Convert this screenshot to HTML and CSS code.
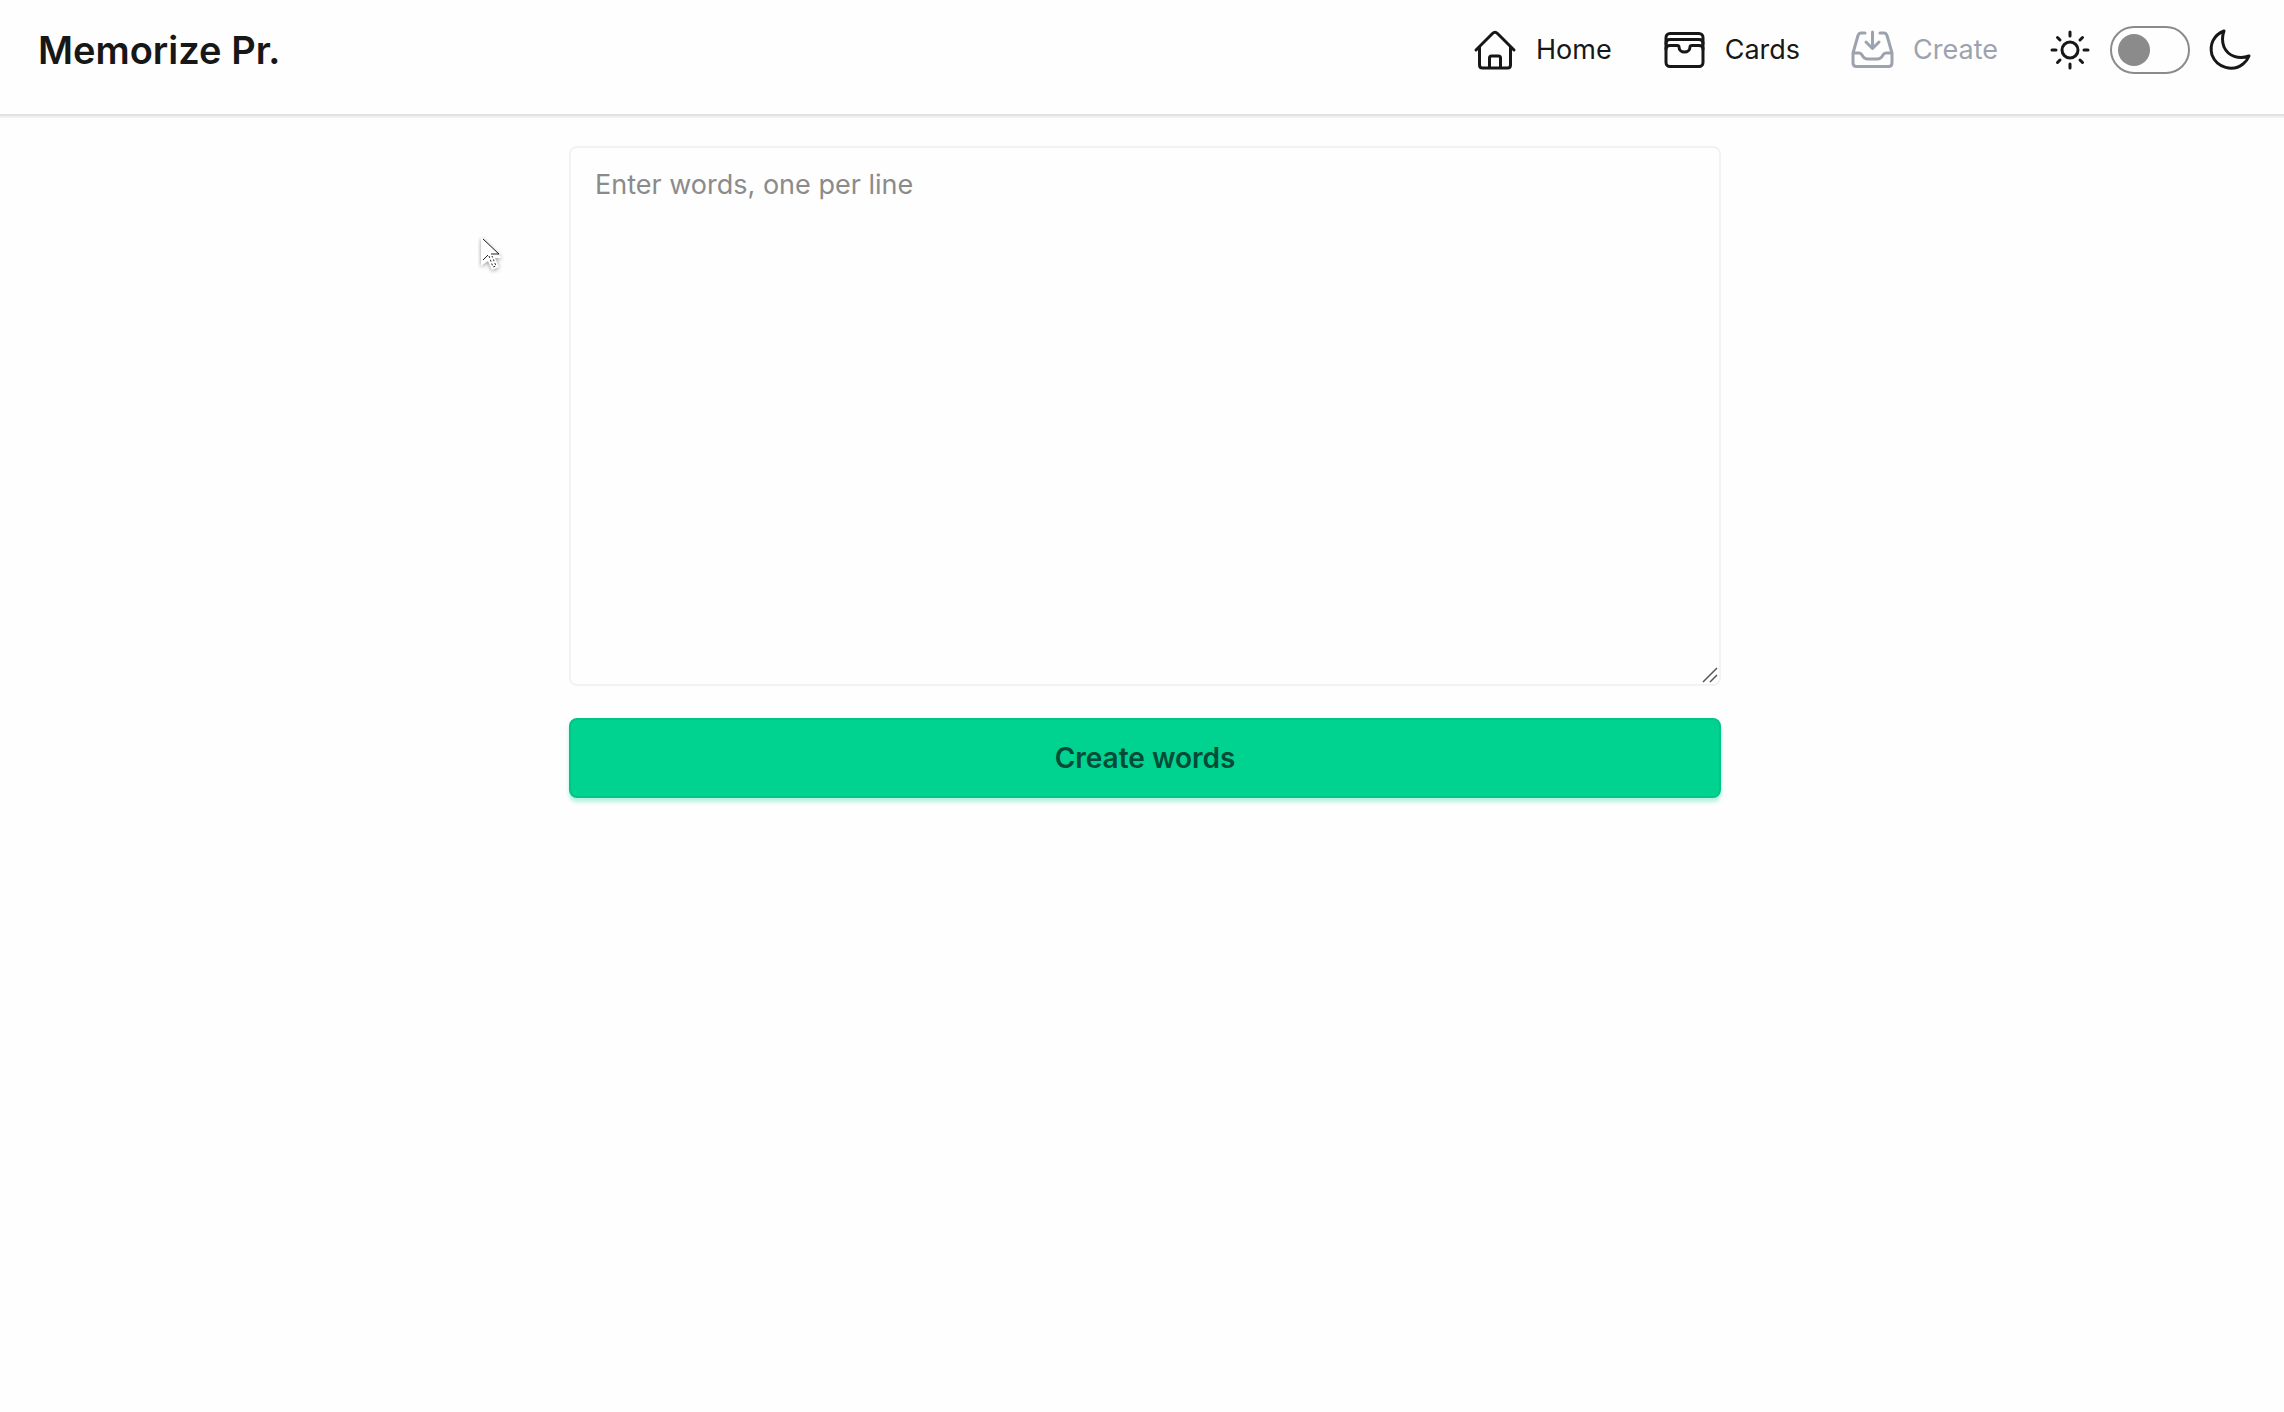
FILE: index.html
```html
<!DOCTYPE html>
<html lang="en">
<head>
<meta charset="utf-8">
<title>Memorize Pr.</title>
<link rel="stylesheet" href="styles.css">
</head>
<body>
<header class="navbar">
  <a class="brand" href="#">Memorize Pr.</a>
  <nav class="nav">
    <a class="nav-link" href="#">
      <svg class="icon" viewBox="0 0 48 48" aria-hidden="true"><path d="M5 24 21.500 7.500Q24 5 26.500 7.500L43 24M8.500 21V39Q8.500 42 11.500 42H36.500Q39.500 42 39.500 39V21M18.500 42V32Q18.500 30 20.500 30H27.500Q29.500 30 29.500 32V42"/></svg>
      Home
    </a>
    <a class="nav-link" href="#">
      <svg class="icon" viewBox="0 0 48 48" aria-hidden="true"><rect x="6" y="7.500" width="37" height="33" rx="4"/><path d="M6 17.500Q6 13.500 10 13.500H39Q43 13.500 43 17.500M6 23Q6 19.500 10 19.500H17Q19 19.500 19 21A5.500 5 0 0 0 30 21Q30 19.500 32 19.500H39Q43 19.500 43 23"/></svg>
      Cards
    </a>
    <a class="nav-link nav-link-active" href="#" aria-current="page">
      <svg class="icon" viewBox="0 0 48 48" aria-hidden="true"><path d="M17 7H13Q11 7 10 9.500L5 27V37Q5 40.500 8.500 40.500H40.500Q44 40.500 44 37V27L39 9.500Q38 7 36 7H32M24.500 6V22M18 16 24.500 22.500 31 16M5 27H11Q13 27 14 29Q16 33 20 33H29Q33 33 35 29Q36 27 38 27H44"/></svg>
      Create
    </a>
  </nav>
  <label class="theme">
    <svg class="icon" viewBox="0 0 48 48" aria-hidden="true"><circle cx="24" cy="24" r="8"/><path d="M24 6V10M24 38V42M6 24H10M38 24H42M11.500 11.500 14 14M34 34 36.500 36.500M11.500 36.500 14 34M34 14 36.500 11.500"/></svg>
    <input class="toggle" type="checkbox" aria-label="Dark theme">
    <svg class="icon" viewBox="0 0 48 48" aria-hidden="true"><path d="M18 5C8 9 3 18 6 29C11 42 27 46 37 38Q41 35 43 30C33 34 22 30 18 21Q15 13 18 5Z"/></svg>
  </label>
</header>
<main class="page">
  <form class="word-form">
    <div class="field">
      <textarea class="words" placeholder="Enter words, one per line" aria-label="Words"></textarea>
      <svg class="grip" viewBox="0 0 16 16" aria-hidden="true"><path d="M1 15 15 1M8 15 15 8"/></svg>
    </div>
    <button class="submit" type="button">Create words</button>
  </form>
</main>
<svg class="pointer" viewBox="0 0 28 38" aria-hidden="true"><path class="pointer-body" d="M3 1V30L10 25L14 34L21 31L17 22H24Z"/><path class="pointer-line" d="M5 3 21 18H13M5 24 10 19"/><path class="pointer-line pointer-dots" d="M11 20 15 31 18 30 14 20"/></svg>
</body>
</html>
```
FILE: styles.css
```css
* {
  box-sizing: border-box;
}

body {
  margin: 0;
  background: #fefefe;
  color: #171717;
  font-family: Inter, "Liberation Sans", sans-serif;
  font-size: 27px;
  line-height: 40px;
}

.navbar {
  display: flex;
  align-items: center;
  padding: 16px 30px 30px 38px;
  min-height: 114px;
  box-shadow: 0 2px 0 #e2e2e2, 0 4px 0 #f1f1f1;
}

.brand {
  margin-right: auto;
  color: inherit;
  font-size: 38px;
  font-weight: 600;
  text-decoration: none;
}

.nav {
  display: flex;
  gap: 48px;
}

.nav-link {
  display: flex;
  align-items: center;
  gap: 17px;
  color: inherit;
  text-decoration: none;
}

.nav-link-active {
  color: #9ca3af;
}

.icon {
  width: 48px;
  height: 48px;
  flex: none;
  fill: none;
  stroke: currentColor;
  stroke-width: 3;
  stroke-linecap: round;
  stroke-linejoin: round;
}

.theme {
  display: flex;
  align-items: center;
  gap: 16px;
  margin-left: 48px;
}

.toggle {
  appearance: none;
  width: 80px;
  height: 48px;
  margin: 0;
  padding: 6px;
  border: 2px solid #8b8b8b;
  border-radius: 24px;
}

.toggle::before {
  content: "";
  display: block;
  width: 32px;
  height: 32px;
  border-radius: 50%;
  background: #8b8b8b;
}

.toggle:checked::before {
  margin-left: auto;
}

.page {
  padding: 32px 24px 32px 30px;
}

.word-form {
  display: flex;
  flex-direction: column;
  gap: 32px;
  max-width: 1152px;
  margin: 0 auto;
}

.field {
  position: relative;
}

.words {
  display: block;
  width: 100%;
  height: 540px;
  padding: 17px 24px;
  border: 2px solid #f2f2f2;
  border-radius: 8px;
  background: transparent;
  color: inherit;
  font: inherit;
  resize: vertical;
}

.words::placeholder {
  color: #8b8b8b;
}

.words::-webkit-resizer {
  background: transparent;
}

/* Larger resize handle over the corner of the text box */
.grip {
  position: absolute;
  right: 3px;
  bottom: 3px;
  width: 16px;
  height: 16px;
  fill: none;
  stroke: #555;
  stroke-width: 1.5;
  pointer-events: none;
}

.submit {
  height: 80px;
  border: 2px solid #00c587;
  border-radius: 8px;
  background: #00d390;
  box-shadow: 0 4px 4px rgba(0, 211, 144, 0.3);
  color: #004c39;
  font: inherit;
  font-size: 28px;
  font-weight: 600;
}

.pointer {
  position: absolute;
  left: 478px;
  top: 236px;
  width: 28px;
  height: 38px;
  pointer-events: none;
}

.pointer-body {
  fill: #fff;
  filter: drop-shadow(0 1px 2px rgba(0, 0, 0, 0.4));
}

.pointer-line {
  fill: none;
  stroke: #222;
}

.pointer-dots {
  stroke-dasharray: 2 2;
}
```
